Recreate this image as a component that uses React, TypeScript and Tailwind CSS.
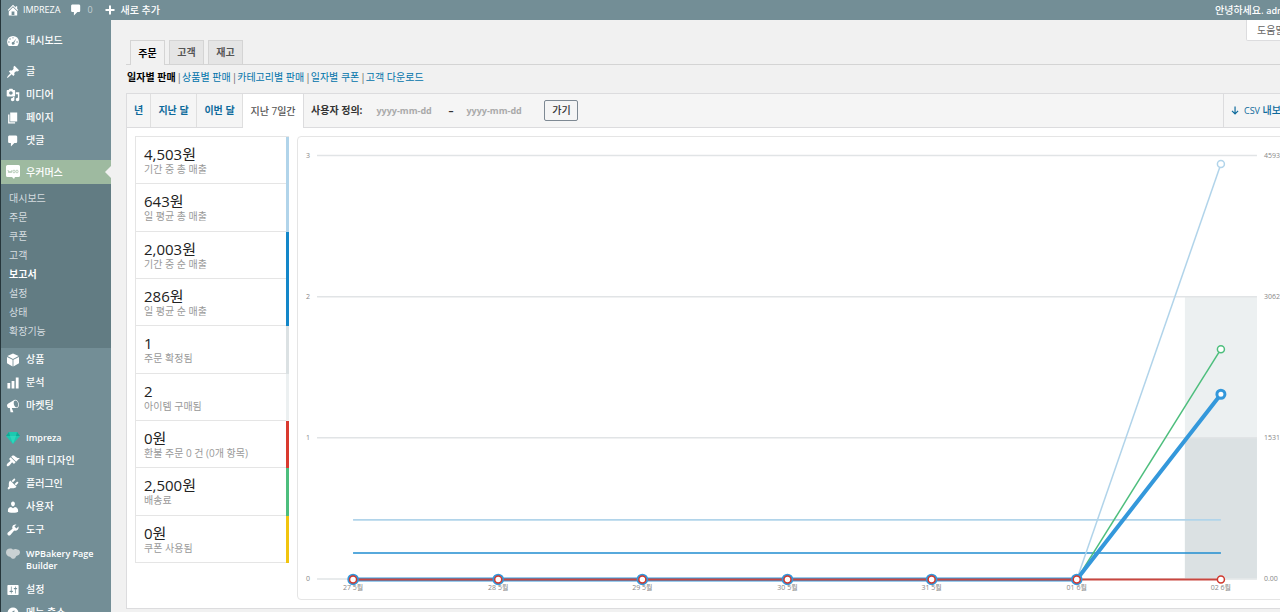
import React from 'react';

const paths = {
  home: 'M16 8.5l1.53 1.53-1.06 1.06L10 4.6l-6.47 6.49-1.06-1.06L10 2.5l4 4v-2h2v4zm-6-2.46l6 5.99V18H4v-5.97zM12 17v-5H8v5h4z',
  comment: 'M5 2h9c1.1 0 2 .9 2 2v7c0 1.1-.9 2-2 2h-2l-5 5v-5H5c-1.1 0-2-.9-2-2V4c0-1.1.9-2 2-2z',
  plus: 'M19 8v4h-7v7H8v-7H1V8h7V1h4v7z',
  dashboard:
    'M3.8 17h12.4a8.5 8.5 0 1 0-12.4 0zM10 4.5a1 1 0 1 1 0 2 1 1 0 0 1 0-2zM5.8 6.2a1 1 0 1 1 0 2 1 1 0 0 1 0-2zM4.2 10.4a1 1 0 1 1 0 2 1 1 0 0 1 0-2zM15.8 10.4a1 1 0 1 1 0 2 1 1 0 0 1 0-2zM14.8 6.3l-3 5.8a2 2 0 1 1-1.4-.8z',
  pin: 'M10.44 3.02l1.82-1.82 6.36 6.35-1.83 1.82c-1.05-.68-2.48-.57-3.41.36l-.75.75c-.92.93-1.04 2.35-.35 3.41l-1.83 1.82-2.41-2.41-2.8 2.79c-.42.42-3.38 2.71-3.8 2.29s1.86-3.39 2.28-3.81l2.79-2.79L4.1 9.36l1.83-1.82c1.05.69 2.48.57 3.4-.36l.75-.75c.93-.92 1.05-2.35.36-3.41z',
  media:
    'M13 11V4c0-.55-.45-1-1-1h-1.67L9 1H5L3.67 3H2c-.55 0-1 .45-1 1v7c0 .55.45 1 1 1h10c.55 0 1-.45 1-1zM7 4.5c1.38 0 2.5 1.12 2.5 2.5S8.38 9.5 7 9.5 4.5 8.38 4.5 7 5.62 4.5 7 4.5zM14 6h5v10.5c0 1.38-1.12 2.5-2.5 2.5S14 17.88 14 16.5s1.12-2.5 2.5-2.5c.17 0 .34.02.5.05V9h-3V6zm-4 8.05V13h2v3.5c0 1.38-1.12 2.5-2.5 2.5S7 17.88 7 16.5 8.12 14 9.5 14c.17 0 .34.02.5.05z',
  page: 'M6 15V2h10v13H6zm-1 1h8v2H3V5h2v11z',
  product: 'M10 .8l8 3.6-8 4-8-4zM1.4 5.8l8 4v9.4l-8-4.4zM18.6 5.8l-8 4v9.4l8-4.4z',
  chart: 'M18 18V2h-4v16h4zm-6 0V7H8v11h4zm-6 0v-8H2v8h4z',
  megaphone:
    'M18.15 5.94c.46 1.62.38 3.22-.02 4.48-.42 1.28-1.26 2.18-2.3 2.48-.16.06-.26.06-.4.06-.06.02-.12.02-.18.02-.06.02-.14.02-.22.02h-6.8l2.22 5.5c.02.14-.06.26-.14.34-.08.1-.24.16-.34.16H6.95c-.1 0-.26-.06-.34-.16-.08-.08-.16-.2-.14-.34l-1-5.5H4.25l-.02-.02c-.5.06-1.08-.18-1.54-.62s-.88-1.08-1.06-1.88c-.24-.8-.2-1.56-.02-2.2.18-.62.58-1.08 1.06-1.3l.02-.02 9-5.4c.1-.06.18-.1.24-.16.06-.04.14-.08.24-.12.16-.08.28-.12.5-.18 1.04-.3 2.24.1 3.22.98s1.84 2.24 2.26 3.86zm-2.58 5.98h-.02c.4-.1.74-.34 1.04-.7.58-.7.86-1.76.86-3.04 0-.64-.1-1.3-.28-1.98-.34-1.36-1.02-2.5-1.78-3.24s-1.68-1.1-2.46-.88c-.82.22-1.4.96-1.7 2-.32 1.04-.28 2.36.06 3.72.38 1.36 1 2.5 1.8 3.24.78.74 1.62 1.1 2.48.88z',
  brush:
    'M14.48 11.06L7.41 3.99l1.5-1.5c.5-.56 2.3-.47 3.51.32 1.21.8 1.43 1.28 2.91 2.1 1.18.64 2.45 1.26 4.45.85zm-.71.71L6.7 4.7 4.93 6.47c-.39.39-.39 1.02 0 1.41l1.06 1.06c.39.39.39 1.03 0 1.42-.6.6-1.43 1.11-2.21 1.69-.35.26-.7.53-1.01.84C1.43 14.23.4 16.08 1.4 17.07c.99 1 2.84-.03 4.18-1.36.31-.31.58-.66.85-1.02.57-.78 1.08-1.61 1.69-2.21.39-.39 1.02-.39 1.41 0l1.06 1.06c.39.39 1.02.39 1.41 0z',
  plug: 'M13.11 4.36L9.87 7.6 8 5.73l3.24-3.24c.35-.34 1.05-.2 1.56.32.52.51.66 1.21.31 1.55zm-8 1.77l.91-1.12 9.01 9.01-1.19.84c-.71.71-2.63 1.16-3.82 1.16H6.14L4.9 17.26c-.59.59-1.54.59-2.12 0-.59-.58-.59-1.53 0-2.12l1.24-1.24v-3.88c0-1.13.4-3.19 1.09-3.89zm7.26 3.97l3.24-3.24c.34-.35 1.04-.21 1.55.31.52.51.66 1.21.31 1.55l-3.24 3.25z',
  user: 'M10 9.25c-2.27 0-2.73-3.44-2.73-3.44C7 4.02 7.82 2 9.97 2c2.16 0 2.98 2.02 2.71 3.81 0 0-.41 3.44-2.68 3.44zm0 2.57L12.72 10c2.39 0 4.52 2.33 4.52 4.53v2.49s-3.65 1.13-7.24 1.13c-3.65 0-7.24-1.13-7.24-1.13v-2.49c0-2.25 1.94-4.48 4.47-4.48z',
  wrench:
    'M16.68 9.77c-1.34 1.34-3.3 1.67-4.95.99l-5.41 6.52c-.99.99-2.59.99-3.58 0s-.99-2.59 0-3.57l6.52-5.42c-.68-1.65-.35-3.61.99-4.95 1.28-1.28 3.12-1.62 4.72-1.06l-2.89 2.89 2.82 2.82 2.86-2.87c.53 1.58.18 3.39-1.08 4.65z',
  settings:
    'M18 16V4c0-.55-.45-1-1-1H3c-.55 0-1 .45-1 1v12c0 .55.45 1 1 1h14c.55 0 1-.45 1-1zM8 11h1c.55 0 1 .45 1 1s-.45 1-1 1H8v1.5c0 .28-.22.5-.5.5s-.5-.22-.5-.5V13H6c-.55 0-1-.45-1-1s.45-1 1-1h1V5.5c0-.28.22-.5.5-.5s.5.22.5.5V11zm5-2h-1c-.55 0-1-.45-1-1s.45-1 1-1h1V5.5c0-.28.22-.5.5-.5s.5.22.5.5V7h1c.55 0 1 .45 1 1s-.45 1-1 1h-1v5.5c0 .28-.22.5-.5.5s-.5-.22-.5-.5V9z',
  collapse:
    'M10 2.16c4.33 0 7.84 3.51 7.84 7.84s-3.51 7.84-7.84 7.84S2.16 14.33 2.16 10 5.71 2.16 10 2.16zm2 11.72V6.12L6.18 9.97z',
  download: 'M8.9 1h2.4v12l4-4 1.7 1.7-6.900 6.900-6.900-6.900L4.900 9l4 4z',
};

type IconName = keyof typeof paths;

function Icon({ name, className = 'size-[14px]' }: { name: IconName; className?: string }) {
  return (
    <svg viewBox="0 0 20 20" fill="currentColor" fillRule="evenodd" className={`shrink-0 ${className}`} aria-hidden="true">
      <path d={paths[name]} />
    </svg>
  );
}

function WooIcon() {
  return (
    <svg viewBox="0 0 14 14" className="size-[14px] shrink-0" aria-hidden="true">
      <path d="M1.500 0h11q1.500 0 1.500 1.500v9q0 1.500-1.500 1.500H9l-1 2-2-2H1.500Q0 12 0 10.500v-9Q0 0 1.500 0z" fill="#fff" />
      <path d="M2 5l1 3 1-2 1 2 1-3" fill="none" stroke="#9ebaa0" strokeWidth=".7" />
      <ellipse cx="8" cy="6.500" rx="1.100" ry="1.400" fill="none" stroke="#9ebaa0" strokeWidth=".7" />
      <ellipse cx="11" cy="6.500" rx="1.100" ry="1.400" fill="none" stroke="#9ebaa0" strokeWidth=".7" />
    </svg>
  );
}

function DiamondIcon() {
  return (
    <svg viewBox="0 0 14 12" className="h-3 w-[14px] shrink-0" aria-hidden="true">
      <path d="M3 0h8l3 4-7 8-7-8z" fill="#1cc9b0" />
      <path d="M3 0l1 4H0zM11 0l-1 4h4z" fill="#12a894" />
      <path d="M4 4h6l-3 8z" fill="#2fd6bc" />
    </svg>
  );
}

function BakeryIcon() {
  return (
    <svg viewBox="0 0 14 11" className="h-[11px] w-[14px] shrink-0" aria-hidden="true">
      <path
        d="M4 .5C5.500.5 6.500 1 7 1.800 8 1 10 .800 11 1.600c1.500-.3 3 1 3 2.700 0 2-1.500 3.200-3 3.500-.7 0-1 .8-1.500 1.800-.8 1.300-2.700 1.700-4 .7-.7-.6-1-1.400-1.700-1.500C1.500 8.500 0 6.600 0 4.500 0 2 1.800.5 4 .5z"
        fill="#c9d1d3"
      />
    </svg>
  );
}

function MenuItem({ icon, children }: { icon: React.ReactNode; children: React.ReactNode }) {
  return (
    <li>
      <a href="#" className="flex h-[23px] items-center gap-[6px] pl-[5px] font-medium text-white">
        {icon}
        {children}
      </a>
    </li>
  );
}

const submenu = ['대시보드', '주문', '쿠폰', '고객', '보고서', '설정', '상태', '확장기능'];

function Sidebar() {
  return (
    <nav className="w-[111px] shrink-0 border-l border-[#26363b] bg-[#738e96] text-[10px]">
      <ul className="mt-[9px]">
        <MenuItem icon={<Icon name="dashboard" />}>대시보드</MenuItem>
      </ul>
      <ul className="mt-2">
        <MenuItem icon={<Icon name="pin" />}>글</MenuItem>
        <MenuItem icon={<Icon name="media" />}>미디어</MenuItem>
        <MenuItem icon={<Icon name="page" />}>페이지</MenuItem>
        <MenuItem icon={<Icon name="comment" />}>댓글</MenuItem>
      </ul>
      <a href="#" className="mt-2 flex h-6 items-center gap-[6px] bg-[#9ebaa0] pl-[5px] font-medium text-white">
        <WooIcon />
        우커머스
        <svg viewBox="0 0 6 12" className="ml-auto h-3 w-[6px]" aria-hidden="true">
          <path d="M6 0v12L0 6z" fill="#f1f1f1" />
        </svg>
      </a>
      <ul className="bg-[#627c83] pt-[5px] pb-[7px]">
        {submenu.map((item) => (
          <li key={item}>
            <a
              href="#"
              className={`flex h-[19px] items-center pl-2 ${item === '보고서' ? 'font-bold text-white' : 'text-[#d5dde0]'}`}
            >
              {item}
            </a>
          </li>
        ))}
      </ul>
      <ul>
        <MenuItem icon={<Icon name="product" />}>상품</MenuItem>
        <MenuItem icon={<Icon name="chart" />}>분석</MenuItem>
        <MenuItem icon={<Icon name="megaphone" />}>마켓팅</MenuItem>
      </ul>
      <ul className="mt-[9px]">
        <MenuItem icon={<DiamondIcon />}>
          <span className="text-[9px] font-semibold">Impreza</span>
        </MenuItem>
        <MenuItem icon={<Icon name="brush" />}>테마 디자인</MenuItem>
        <MenuItem icon={<Icon name="plug" />}>플러그인</MenuItem>
        <MenuItem icon={<Icon name="user" />}>사용자</MenuItem>
        <MenuItem icon={<Icon name="wrench" />}>도구</MenuItem>
        <li>
          <a href="#" className="flex gap-[6px] pt-[7px] pb-[6px] pl-[5px] text-[9px] leading-3 font-semibold text-white">
            <BakeryIcon />
            WPBakery Page Builder
          </a>
        </li>
        <MenuItem icon={<Icon name="settings" />}>설정</MenuItem>
        <MenuItem icon={<Icon name="collapse" />}>메뉴 축소</MenuItem>
      </ul>
    </nav>
  );
}

function AdminBar() {
  return (
    <header className="flex h-5 shrink-0 items-center border-l border-[#26363b] bg-[#738e96] pl-[5px] text-[10px] font-medium text-white">
      <a href="#" className="flex items-center gap-[3px]">
        <Icon name="home" />
        <span className="text-[9px]">IMPREZA</span>
      </a>
      <a href="#" className="ml-[9px] flex items-center gap-1">
        <Icon name="comment" />
        <span className="text-[9px] font-normal text-[#c3d0d4]">0</span>
      </a>
      <a href="#" className="ml-3 flex items-center gap-[6px]">
        <Icon name="plus" className="size-[10px]" />
        새로 추가
      </a>
      <a href="#" className="-mr-4 ml-auto w-[81px] whitespace-nowrap">
        안녕하세요. <span className="text-[9px] font-semibold">admin</span>
      </a>
    </header>
  );
}

const stats = [
  { value: '4,503원', label: '기간 중 총 매출', bar: 'border-[#b1d4ea]' },
  { value: '643원', label: '일 평균 총 매출', bar: 'border-[#b1d4ea]' },
  { value: '2,003원', label: '기간 중 순 매출', bar: 'border-[#1387c9]' },
  { value: '286원', label: '일 평균 순 매출', bar: 'border-[#1387c9]' },
  { value: '1', label: '주문 확정됨', bar: 'border-[#dbe1e3]' },
  { value: '2', label: '아이템 구매됨', bar: 'border-[#ecf0f1]' },
  { value: '0원', label: '환불 주문 0 건 (0개 항목)', bar: 'border-[#d93a2f]' },
  { value: '2,500원', label: '배송료', bar: 'border-[#4dbe7d]' },
  { value: '0원', label: '쿠폰 사용됨', bar: 'border-[#f1c40f]' },
];

function Legend() {
  return (
    <ul className="grid h-[427px] w-[154px] shrink-0 grid-rows-9 border-t border-l border-[#e5e5e5]">
      {stats.map((stat) => (
        <li key={stat.label} className={`flex border-r-3 ${stat.bar}`}>
          <div className="flex-1 border-b border-[#e5e5e5] pt-2 pl-2">
            <strong className="block text-[15px] leading-[18px] font-normal text-[#222]">{stat.value}</strong>
            <span className="block text-[10px] leading-3 whitespace-nowrap text-[#999]">{stat.label}</span>
          </div>
        </li>
      ))}
    </ul>
  );
}

const days = ['27 5월', '28 5월', '29 5월', '30 5월', '31 5월', '01 6월', '02 6월'];
const dayX = [55, 200, 344, 489, 633, 778, 922];
const rows = [
  { y: 18, left: '3', right: '4593.06' },
  { y: 159, left: '2', right: '3062.04' },
  { y: 300, left: '1', right: '1531.02' },
  { y: 441, left: '0', right: '0.00' },
];

function Chart() {
  return (
    <div className="min-w-0 flex-1 rounded-sm border border-[#e5e5e5]">
      <svg viewBox="0 0 1003 462" className="block h-auto w-full" role="img" aria-label="주문">
        <rect x="886" y="159" width="72" height="282" fill="#ecf0f1" />
        <rect x="886" y="300" width="72" height="141" fill="#dbe1e3" />
        {rows.map((row) => (
          <g key={row.y} fontSize="7" fill="#888">
            <line x1="19" x2="958" y1={row.y + 0.5} y2={row.y + 0.5} stroke="#e1e4e6" strokeWidth="1.500" />
            <text x="8" y={row.y + 3}>
              {row.left}
            </text>
            <text x="965" y={row.y + 3}>
              {row.right}
            </text>
          </g>
        ))}
        <path d="M55 382.500H922" stroke="#b1d4ea" strokeWidth="1.500" />
        <path d="M55 415.500H922" stroke="#1f8dd0" strokeWidth="1.500" />
        <path d="M778 442L922 27" stroke="#b1d4ea" strokeWidth="1.500" />
        <path d="M778 442L922 212" stroke="#4dbe7d" strokeWidth="1.500" />
        <path d="M55 442H778L922 257" fill="none" stroke="#3498db" strokeWidth="4" />
        <path d="M55 442H922" stroke="#c9463f" strokeWidth="2" />
        <g fill="#fff">
          <circle cx="922" cy="27" r="3.500" stroke="#b1d4ea" strokeWidth="1.500" />
          <circle cx="922" cy="212" r="3.500" stroke="#4dbe7d" strokeWidth="1.500" />
          <circle cx="922" cy="257" r="4" stroke="#3498db" strokeWidth="3" />
          {dayX.map((x, i) => (
            <g key={x}>
              {i < 6 && <circle cx={x} cy="442" r="4.500" stroke="#3498db" strokeWidth="2.500" />}
              <circle cx={x} cy="442" r="3.500" stroke="#d0382d" strokeWidth="1.500" />
            </g>
          ))}
        </g>
        <g fontSize="7" fill="#888" textAnchor="middle">
          {days.map((day, i) => (
            <text key={day} x={dayX[i]} y="453">
              {day}
            </text>
          ))}
        </g>
      </svg>
    </div>
  );
}

const reports = ['상품별 판매', '카테고리별 판매', '일자별 쿠폰', '고객 다운로드'];

function ReportToolbar() {
  return (
    <div className="flex h-[34px] items-stretch text-[10px] font-bold whitespace-nowrap text-[#333]">
      <div className="flex border-b border-[#dcdcde] bg-[#f5f5f5] text-[#0d6a9c]">
        <a href="#" className="flex w-6 items-center justify-center border-r border-[#dfdfdf]">
          년
        </a>
        <a href="#" className="flex w-[46px] items-center justify-center border-r border-[#dfdfdf]">
          지난 달
        </a>
        <a href="#" className="flex w-[46px] items-center justify-center border-r border-[#dfdfdf]">
          이번 달
        </a>
      </div>
      <a href="#" className="flex w-[60px] items-center justify-center font-medium text-[#555]">
        지난 7일간
      </a>
      <form
        className="flex flex-1 items-center border-b border-l border-[#dcdcde] bg-[#f5f5f5] pl-[7px]"
        onSubmit={(e) => e.preventDefault()}
      >
        <label htmlFor="from">사용자 정의:</label>
        <input
          id="from"
          placeholder="yyyy-mm-dd"
          className="ml-[14px] w-[72px] bg-transparent text-[9px] font-bold placeholder:text-[#aaa]"
        />
        <span>–</span>
        <input
          aria-label="종료일"
          placeholder="yyyy-mm-dd"
          className="ml-[13px] w-[78px] bg-transparent text-[9px] font-bold placeholder:text-[#aaa]"
        />
        <button type="submit" className="h-[21px] w-[34px] rounded-xs border border-[#7e8993] font-medium">
          가기
        </button>
      </form>
      <a
        href="#"
        className="flex w-[88px] items-center gap-1 border-b border-l border-[#dcdcde] bg-[#f5f5f5] pl-[6px] font-medium text-[#0d6a9c]"
      >
        <Icon name="download" className="size-[10px]" />
        <span>
          <span className="text-[9px]">CSV</span> 내보내기
        </span>
      </a>
    </div>
  );
}

export default function App() {
  return (
    <div className="flex h-screen flex-col overflow-hidden bg-[#f1f1f1] font-['Open_Sans','Noto_Sans_CJK_KR',sans-serif]">
      <AdminBar />
      <div className="flex min-h-0 flex-1">
        <Sidebar />
        <main className="-mr-8 min-w-0 flex-1 pl-[15px]">
          <div className="flex h-5 justify-end">
            <button
              type="button"
              className="h-[21px] w-[66px] rounded-b-xs border border-t-0 border-[#dcdcde] bg-white pl-[10px] text-left text-[10px] text-[#666]"
            >
              도움말
            </button>
          </div>
          <div className="flex h-[25px] items-end gap-1 border-b border-[#d4d4d4] pl-1 text-[10px] font-semibold text-[#555]">
            <a
              href="#"
              className="-mb-px flex h-[25px] w-[35px] items-center justify-center border border-b-0 border-[#d4d4d4] bg-[#f1f1f1] text-black"
            >
              주문
            </a>
            <a href="#" className="flex h-6 w-[35px] items-center justify-center border border-b-0 border-[#d4d4d4] bg-[#e5e5e5]">
              고객
            </a>
            <a href="#" className="flex h-6 w-[35px] items-center justify-center border border-b-0 border-[#d4d4d4] bg-[#e5e5e5]">
              재고
            </a>
          </div>
          <ul className="flex h-[28px] items-center pb-1 pl-px text-[10px] whitespace-nowrap text-[#0073aa]">
            <li>
              <a href="#" className="font-bold text-black">
                일자별 판매
              </a>
            </li>
            {reports.map((report) => (
              <li key={report}>
                <span className="ml-px text-[#666]">|</span>
                <a href="#">{report}</a>
              </li>
            ))}
          </ul>
          <section className="border border-[#dcdcde] bg-white">
            <ReportToolbar />
            <div className="flex items-start gap-2 p-2">
              <Legend />
              <Chart />
            </div>
          </section>
        </main>
      </div>
    </div>
  );
}
